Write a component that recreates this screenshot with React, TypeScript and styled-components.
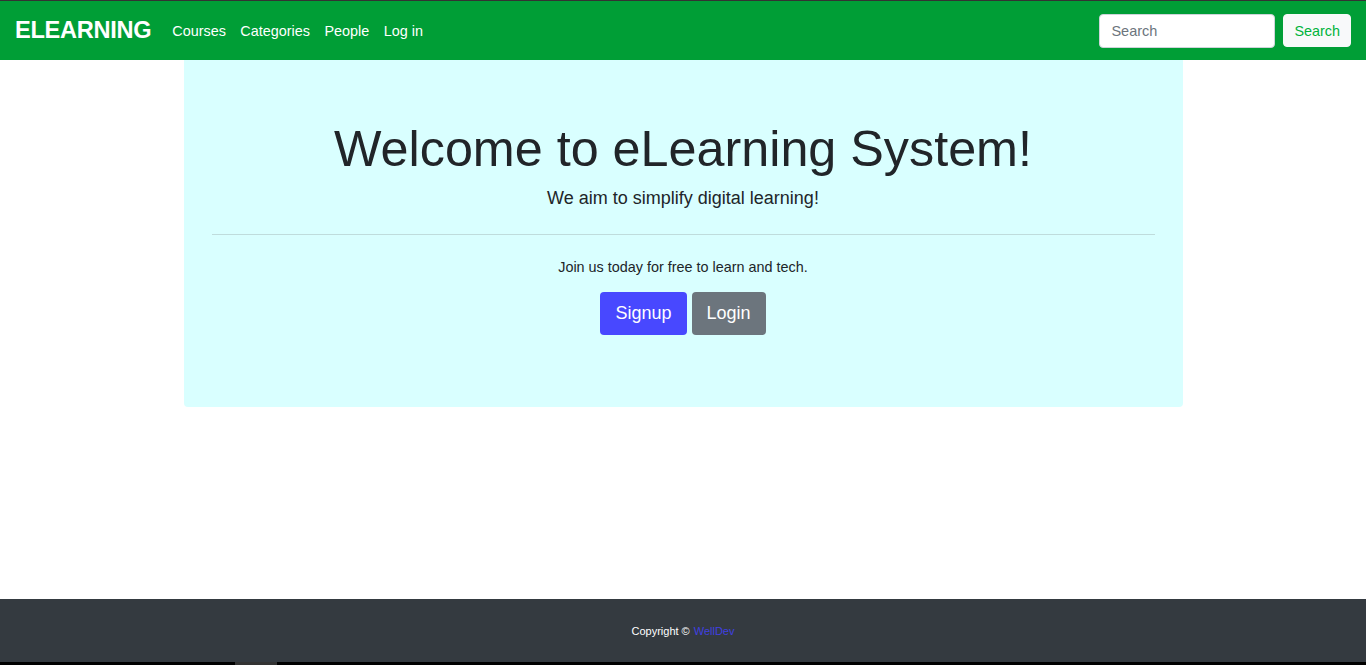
import React from 'react';
import styled, { createGlobalStyle } from 'styled-components';

const GlobalStyle = createGlobalStyle`
  html, body {
    margin: 0;
    padding: 0;
    height: 100%;
  }
  body {
    font-family: "Liberation Sans", Arial, sans-serif;
    color: #212529;
    background: #fff;
  }
  #root {
    min-height: 100vh;
  }
`;

const Page = styled.div`
  display: flex;
  flex-direction: column;
  min-height: 100vh;
  border-top: 1px solid #333;
  box-sizing: border-box;
`;

const Navbar = styled.nav`
  display: flex;
  align-items: center;
  height: 59px;
  padding: 0 15px 0;
  background: #009e36;
  box-sizing: border-box;
`;

const Brand = styled.a`
  font-size: 23.6px;
  font-weight: 700;
  color: #fff;
  text-decoration: none;
  margin-right: 21px;
  letter-spacing: -0.3px;
`;

const NavLinks = styled.div`
  display: flex;
  gap: 14.5px;
`;

const NavLink = styled.a`
  font-size: 14.4px;
  color: #fff;
  text-decoration: none;
`;

const SearchForm = styled.form`
  display: flex;
  align-items: center;
  gap: 8px;
  margin-left: auto;
`;

const SearchInput = styled.input`
  width: 176px;
  height: 34px;
  box-sizing: border-box;
  padding: 0 11px;
  font-family: inherit;
  font-size: 14.5px;
  border: 1px solid #ced4da;
  border-radius: 4px;
  background: #fff;
  &::placeholder {
    color: #6c757d;
  }
`;

const SearchButton = styled.button`
  height: 33px;
  padding: 0 10px;
  font-family: inherit;
  font-size: 14.4px;
  color: #00b33c;
  background: #f8f9fa;
  border: 1px solid #f8f9fa;
  border-radius: 4px;
`;

const Main = styled.main`
  display: flex;
  justify-content: center;
`;

const Jumbotron = styled.section`
  width: 999px;
  box-sizing: border-box;
  padding: 59px 28px 72px;
  background: #d9ffff;
  border-radius: 0 0 4px 4px;
  text-align: center;
`;

const Title = styled.h1`
  margin: 0;
  font-size: 50.3px;
  font-weight: 400;
  line-height: 60px;
`;

const Lead = styled.p`
  margin: 7px 0 0;
  font-size: 18px;
  line-height: 25px;
`;

const Divider = styled.hr`
  margin: 23px 0 22px;
  border: 0;
  border-top: 1px solid #bfdcdc;
`;

const Text = styled.p`
  margin: 0 0 14px;
  font-size: 14.4px;
  line-height: 21px;
`;

const Buttons = styled.div`
  display: flex;
  justify-content: center;
  gap: 5px;
`;

const ActionButton = styled.button<{ $variant: 'primary' | 'secondary' }>`
  height: 43px;
  padding: 0 15px;
  font-family: inherit;
  font-size: 18px;
  color: #fff;
  border: none;
  border-radius: 4px;
  background: ${p => (p.$variant === 'primary' ? '#4848ff' : '#6c757d')};
`;

const Footer = styled.footer`
  margin-top: auto;
  height: 63px;
  display: flex;
  align-items: center;
  justify-content: center;
  background: #343a40;
  color: #fff;
  font-size: 11px;
`;

const FooterLink = styled.a`
  color: #4040e0;
  text-decoration: none;
  margin-left: 4px;
`;

const BottomStrip = styled.div`
  height: 3px;
  background: #000;
  display: flex;
  padding-left: 235px;
`;

const StripTab = styled.span`
  width: 42px;
  background: #333;
`;

export default function App() {
  return (
    <>
      <GlobalStyle />
      <Page>
        <Navbar>
          <Brand href="#">ELEARNING</Brand>
          <NavLinks>
            <NavLink href="#">Courses</NavLink>
            <NavLink href="#">Categories</NavLink>
            <NavLink href="#">People</NavLink>
            <NavLink href="#">Log in</NavLink>
          </NavLinks>
          <SearchForm onSubmit={e => e.preventDefault()}>
            <SearchInput type="search" placeholder="Search" />
            <SearchButton type="submit">Search</SearchButton>
          </SearchForm>
        </Navbar>
        <Main>
          <Jumbotron>
            <Title>Welcome to eLearning System!</Title>
            <Lead>We aim to simplify digital learning!</Lead>
            <Divider />
            <Text>Join us today for free to learn and tech.</Text>
            <Buttons>
              <ActionButton $variant="primary">Signup</ActionButton>
              <ActionButton $variant="secondary">Login</ActionButton>
            </Buttons>
          </Jumbotron>
        </Main>
        <Footer>
          Copyright ©<FooterLink href="#">WellDev</FooterLink>
        </Footer>
        <BottomStrip>
          <StripTab />
        </BottomStrip>
      </Page>
    </>
  );
}
